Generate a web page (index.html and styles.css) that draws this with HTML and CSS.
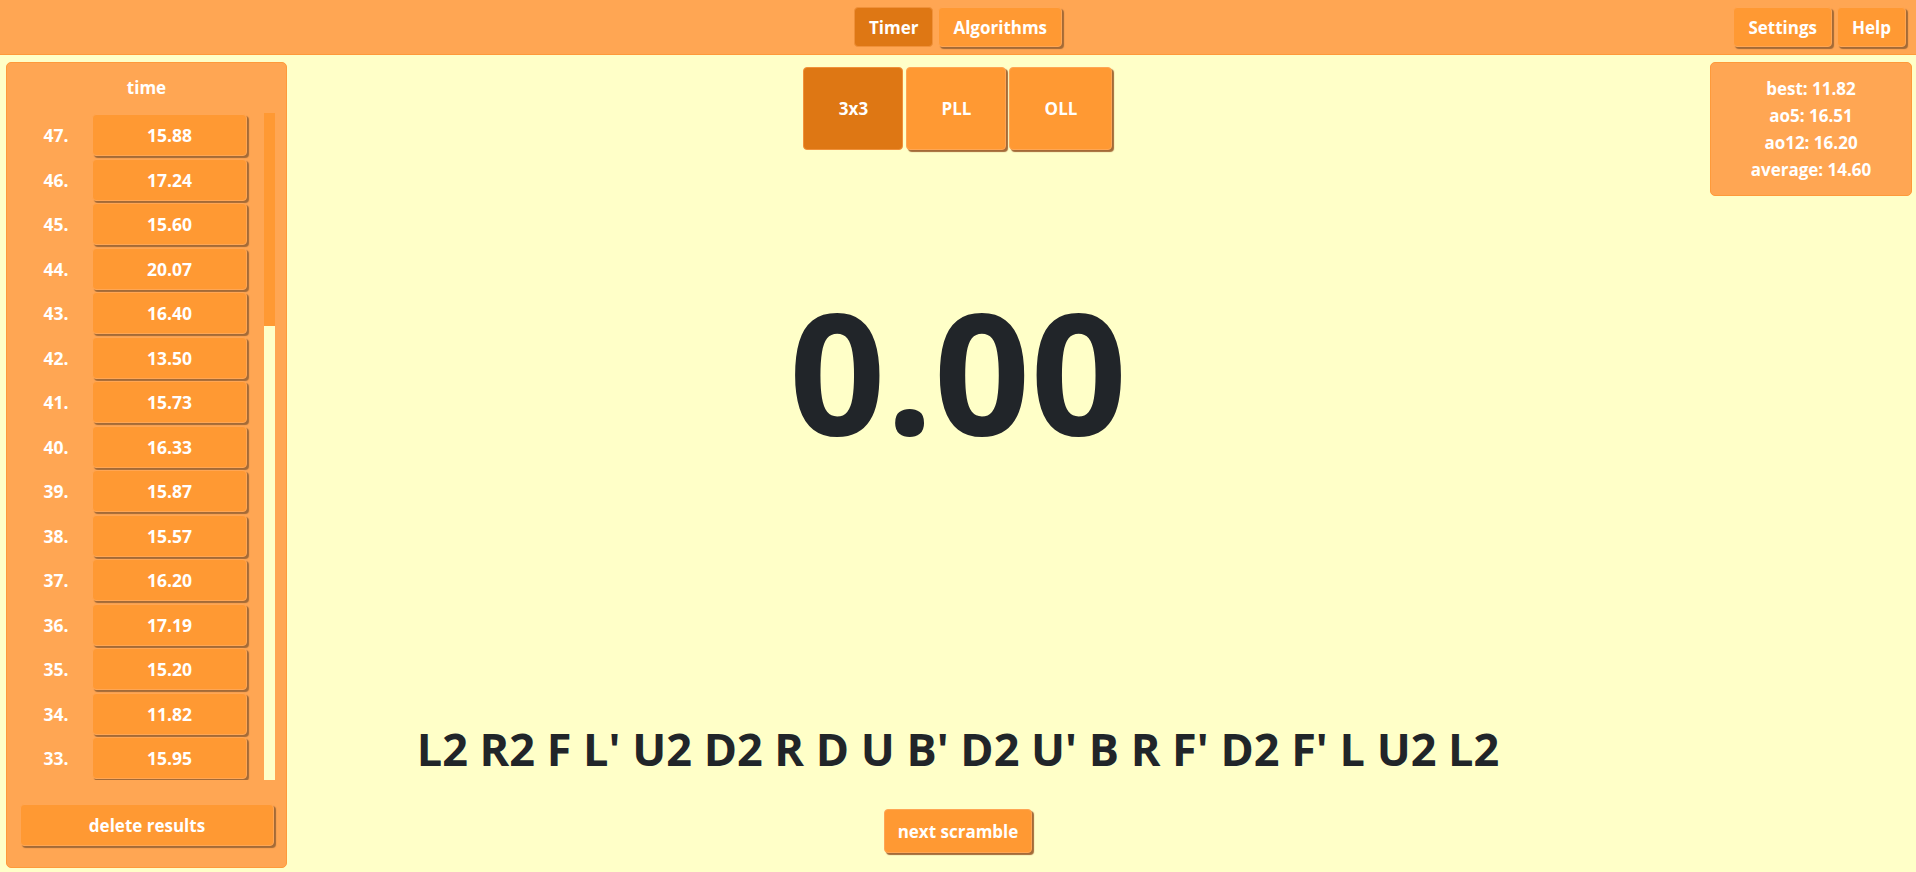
FILE: index.html
```html
<!DOCTYPE html>
<html lang="en">
<head>
<meta charset="utf-8">
<title>Cube Timer</title>
<link rel="stylesheet" href="styles.css">
</head>
<body>
<header class="topbar">
  <div class="topbar-side"></div>
  <nav class="topbar-center">
    <button class="btn btn-nav active">Timer</button>
    <button class="btn btn-nav">Algorithms</button>
  </nav>
  <div class="topbar-right">
    <button class="btn btn-nav">Settings</button>
    <button class="btn btn-nav">Help</button>
  </div>
</header>

<main class="layout">
  <aside class="results">
    <div class="results-head">time</div>
    <div class="results-body">
      <div class="results-list">
        <div class="row"><span class="num">47.</span><button class="btn btn-time">15.88</button></div>
        <div class="row"><span class="num">46.</span><button class="btn btn-time">17.24</button></div>
        <div class="row"><span class="num">45.</span><button class="btn btn-time">15.60</button></div>
        <div class="row"><span class="num">44.</span><button class="btn btn-time">20.07</button></div>
        <div class="row"><span class="num">43.</span><button class="btn btn-time">16.40</button></div>
        <div class="row"><span class="num">42.</span><button class="btn btn-time">13.50</button></div>
        <div class="row"><span class="num">41.</span><button class="btn btn-time">15.73</button></div>
        <div class="row"><span class="num">40.</span><button class="btn btn-time">16.33</button></div>
        <div class="row"><span class="num">39.</span><button class="btn btn-time">15.87</button></div>
        <div class="row"><span class="num">38.</span><button class="btn btn-time">15.57</button></div>
        <div class="row"><span class="num">37.</span><button class="btn btn-time">16.20</button></div>
        <div class="row"><span class="num">36.</span><button class="btn btn-time">17.19</button></div>
        <div class="row"><span class="num">35.</span><button class="btn btn-time">15.20</button></div>
        <div class="row"><span class="num">34.</span><button class="btn btn-time">11.82</button></div>
        <div class="row"><span class="num">33.</span><button class="btn btn-time">15.95</button></div>
      </div>
      <div class="scrollbar"><div class="scrollbar-thumb"></div></div>
    </div>
    <button class="btn btn-delete">delete results</button>
  </aside>

  <section class="center">
    <div class="modes">
      <button class="btn btn-mode active">3x3</button>
      <button class="btn btn-mode">PLL</button>
      <button class="btn btn-mode">OLL</button>
    </div>
    <div class="clock">0.00</div>
    <div class="scramble">L2 R2 F L' U2 D2 R D U B' D2 U' B R F' D2 F' L U2 L2</div>
    <button class="btn btn-next">next scramble</button>
  </section>

  <aside class="stats">
    <div>best: 11.82</div>
    <div>ao5: 16.51</div>
    <div>ao12: 16.20</div>
    <div>average: 14.60</div>
  </aside>
</main>
</body>
</html>
```

FILE: styles.css
```css
* { box-sizing: border-box; }

html, body {
  margin: 0;
  padding: 0;
  height: 100%;
}

body {
  background: #ffffc8;
  color: #212529;
  font-family: "Open Sans", "Noto Sans", "Liberation Sans", sans-serif;
  overflow: hidden;
}

.btn {
  font-family: inherit;
  font-weight: 700;
  color: #ffffff;
  background: #ff9933;
  border: 1px solid #ffa654;
  border-radius: 4px;
  box-shadow: 2px 2px 1px #a36a37;
  cursor: pointer;
  padding: 0;
}

.btn.active {
  background: #de7714;
  border-color: #f0913a;
  box-shadow: none;
}

/* top bar */
.topbar {
  height: 55px;
  background: #ffa653;
  border-bottom: 1px solid #ff9a3a;
  display: grid;
  grid-template-columns: 1fr auto 1fr;
  align-items: center;
}

.topbar-center,
.topbar-right {
  display: flex;
  gap: 5px;
}

.topbar-right {
  justify-self: end;
  margin-right: 10px;
}

.btn-nav {
  height: 40px;
  padding: 0 14px;
  font-size: 17px;
}

/* main layout */
.layout {
  display: grid;
  grid-template-columns: 1fr auto 1fr;
  height: calc(100% - 55px);
}

.results {
  justify-self: start;
  margin: 7px 0 0 6px;
  width: 281px;
  height: 806px;
  background: #ffa653;
  border: 1px solid #ff9a3a;
  border-radius: 5px;
  padding: 0 11px 0 13px;
  display: flex;
  flex-direction: column;
}

.results-head {
  height: 50px;
  line-height: 50px;
  text-align: center;
  color: #fff;
  font-weight: 700;
  font-size: 17px;
  margin-left: -13px;
  margin-right: -11px;
}

.results-body {
  display: flex;
  height: 667px;
}

.results-list {
  flex: 1;
  overflow: hidden;
  padding-top: 1px;
  display: flex;
  flex-direction: column;
  gap: 2.5px;
}

.scrollbar {
  width: 11px;
  height: 100%;
  background: #ffffc8;
}

.scrollbar-thumb {
  height: 213px;
  background: #ff9933;
}

.row {
  display: grid;
  grid-template-columns: 72px 155px;
  align-items: center;
  flex: none;
}

.num {
  text-align: center;
  color: #fff;
  font-weight: 700;
  font-size: 17.5px;
}

.btn-time {
  height: 42px;
  font-size: 17.5px;
}

.btn-delete {
  margin-top: 24px;
  height: 42px;
  width: 254px;
  font-size: 17px;
}

/* center */
.center {
  display: flex;
  flex-direction: column;
  align-items: center;
}

.modes {
  margin-top: 12px;
  display: flex;
  gap: 3px;
}

.btn-mode {
  width: 100px;
  height: 83px;
  font-size: 17px;
}

.btn-mode:last-child {
  width: 103px;
}

.clock {
  margin-top: 135px;
  font-size: 169px;
  line-height: 1;
  font-weight: 700;
  height: 171px;
}

.scramble {
  margin-top: 270px;
  font-size: 45px;
  line-height: 1;
  font-weight: 700;
  white-space: nowrap;
}

.btn-next {
  margin-top: 38px;
  height: 44px;
  width: 148px;
  font-size: 17px;
}

/* stats */
.stats {
  justify-self: end;
  align-self: start;
  margin: 7px 4px 0 0;
  width: 202px;
  padding: 12px 0;
  background: #ffa653;
  border: 1px solid #ff9a3a;
  border-radius: 5px;
  color: #fff;
  font-weight: 700;
  font-size: 17px;
  line-height: 27px;
  text-align: center;
}
```
